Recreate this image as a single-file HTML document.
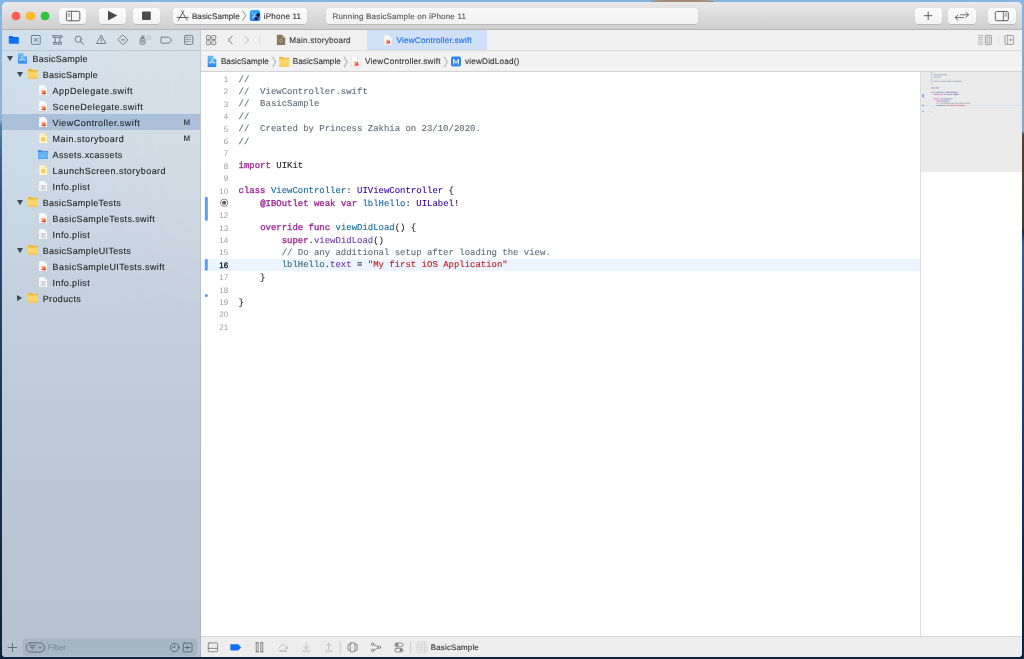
<!DOCTYPE html>
<html lang="en">
<head>
<meta charset="utf-8">
<title>BasicSample — ViewController.swift</title>
<style>
*{box-sizing:border-box;margin:0;padding:0}
html,body{width:1024px;height:659px;overflow:hidden}
body{font-family:"Liberation Sans",sans-serif;position:relative;text-rendering:geometricPrecision;
 background:linear-gradient(180deg,#86b5e3 0px,#8ab3dd 120px,#4d87ab 125px,#3b618d 160px,#30507e 200px,#2a4775 260px,#1b3458 400px,#12294a 550px,#0d2140 659px);}
.abs{position:absolute}
#rstrip{position:absolute;right:0;top:0;width:6px;height:659px;background:linear-gradient(180deg,#86b5e3 0px,#86a9c8 60px,#8aa8c2 131px,#4d4538 135px,#3e3a33 228px,#152a48 232px,#3a5f8d 243px,#2d4d7a 330px,#16305a 500px,#0d2140 659px)}
#island{position:absolute;left:651px;top:0;width:63px;height:2.600px;background:#a78a72;border-radius:45% 45% 0 0}
#win{filter:blur(.3px);will-change:transform;position:absolute;left:2px;top:2px;width:1020px;height:655px;border-radius:5px 5px 4px 4px;overflow:hidden;background:#fff}
/* ---------- toolbar ---------- */
#tb{position:absolute;left:0;top:0;width:1020px;height:28px;background:linear-gradient(180deg,#e9e9e9 0,#e4e4e4 20%,#d9d9d9 60%,#cfcfcf 100%);border-bottom:1px solid #b4b4b4}
.tl{position:absolute;top:9.7px;width:8.6px;height:8.6px;border-radius:50%}
.btn{position:absolute;top:6px;height:16px;border-radius:3.5px;background:linear-gradient(180deg,#fcfcfc,#f3f3f3);box-shadow:0 .4px .6px rgba(0,0,0,.22),0 0 0 .3px rgba(0,0,0,.06)}
.btn svg{position:absolute;left:0;top:0}
.tt{position:absolute;white-space:pre;line-height:1;-webkit-text-stroke:.12px}
/* ---------- sidebar ---------- */
#sb{position:absolute;left:0;top:28px;width:198px;height:627px;
 background:linear-gradient(180deg,#d6e2eb 0,#d3dee8 90px,#cad6e2 200px,#c0ccd9 330px,#bac6d3 480px,#b6c2cf 627px)}
#sbshade{position:absolute;left:0;top:0;width:100%;height:100%;background:linear-gradient(90deg,rgba(190,214,236,.2) 0,rgba(200,215,230,0) 50%,rgba(222,222,222,.22) 100%);-webkit-mask-image:linear-gradient(180deg,#000 0,#000 110px,transparent 290px);mask-image:linear-gradient(180deg,#000 0,#000 110px,transparent 290px)}
#navsep{position:absolute;left:0;top:20px;width:100%;height:1px;background:rgba(120,140,160,.28)}
.row{position:absolute;left:0;width:100%;height:16px}
.row .t{position:absolute;top:4.3px;font-size:9px;color:#20252a;white-space:pre;line-height:11px;-webkit-text-stroke:.12px #20252a}
.row svg{position:absolute}
.row .m{position:absolute;left:181.4px;top:4.2px;font-size:8px;font-weight:bold;color:#454b52;line-height:9px}
#sel{position:absolute;left:0;top:84px;width:100%;height:16px;background:#abc1d9}
/* ---------- editor ---------- */
#ed{position:absolute;left:198px;top:28px;width:822px;height:627px;background:#fff}
#eddiv{position:absolute;left:0;top:0;width:1px;height:627px;background:linear-gradient(180deg,#c6d0d9 0,#b4c0cd 300px,#a9b6c4 627px);z-index:5}
#tabs{position:absolute;left:0;top:0;width:100%;height:20.5px;background:#f0f0f0;border-bottom:1px solid #dadada}
#jump{position:absolute;left:0;top:20.5px;width:100%;height:21.5px;background:#f2f2f2;border-bottom:1px solid #d4d4d4}
#seltab{position:absolute;left:166.6px;top:0;width:120.3px;height:19.5px;background:#cfe0f8}
#code{position:absolute;left:0;top:42px;width:720px;height:564px;background:#fff}
#mini{position:absolute;left:720px;top:42px;width:102px;height:565px;background:#fff;border-left:1px solid #dcdcdc}
#minihl{position:absolute;left:0;top:0;width:100%;height:99.8px;background:#ebebeb}
#dbg{position:absolute;left:0;top:606px;width:100%;height:21px;background:#ededed;border-top:1px solid #d6d6d6}
.ln{position:absolute;left:0;width:28.2px;text-align:right;font-family:"Liberation Sans",sans-serif;font-size:8px;color:#9c9c9c;line-height:12.38px;height:12.38px;padding-top:.4px}
.cl{position:absolute;left:38.6px;font-family:"Liberation Mono",monospace;font-size:8.98px;line-height:12.38px;height:12.38px;white-space:pre;color:#262626;-webkit-text-stroke:.1px}
.c{color:#5d6c79}.k{color:#a02898;-webkit-text-stroke:.32px #a02898}.ty{color:#3900a0}.d{color:#0f68a0}.pr{color:#326d74}.f{color:#6c36a9}.s{color:#c41a16}.dv{color:#1c464a}
</style>
</head>
<body>
<div id="rstrip"></div>
<div id="island"></div>
<div id="win">
<div id="tb">
 <div class="tl" style="left:9.7px;background:#fd5f57;box-shadow:0 0 0 .3px #e2463e"></div>
 <div class="tl" style="left:24.4px;background:#febc2e;box-shadow:0 0 0 .3px #dfa023"></div>
 <div class="tl" style="left:38.8px;background:#28c840;box-shadow:0 0 0 .3px #1dad2b"></div>
 <div class="btn" style="left:57px;width:27.3px">
  <svg width="27.3" height="16" viewBox="0 0 27.3 16"><rect x="7.4" y="3.3" width="13.4" height="9.5" rx="1.3" fill="none" stroke="#4d4d4d" stroke-width=".9"/><path d="M12.5 3.3V12.8" stroke="#4d4d4d" stroke-width=".8"/><path d="M8.9 6h2.2M8.9 8h2.2" stroke="#4d4d4d" stroke-width=".8"/></svg>
 </div>
 <div class="btn" style="left:97px;width:27.3px">
  <svg width="27.3" height="16" viewBox="0 0 27.3 16"><path d="M9 2.7L18.4 7.6L9 12.5Z" fill="#4b4b4b"/></svg>
 </div>
 <div class="btn" style="left:131px;width:27px">
  <svg width="27" height="16" viewBox="0 0 27 16"><rect x="9" y="3.5" width="8.8" height="8.5" rx="1" fill="#4b4b4b"/></svg>
 </div>
 <div class="btn" style="left:171px;width:134.2px">
  <svg width="134.2" height="16" viewBox="0 0 134.2 16">
   <g stroke="#585858" stroke-width=".95" fill="none" stroke-linecap="round"><path d="M10.700 2.900L5.300 12.400M8.700 3.200L14.200 12.100M4.100 9.500H15.400"/></g>
   <path d="M69.500 2.700L72.900 7.600L69.500 12.600" stroke="#686868" stroke-width=".75" fill="none"/>
   <defs><linearGradient id="sim" x1="0" y1="0" x2="0" y2="1"><stop offset="0" stop-color="#3aaaf9"/><stop offset="1" stop-color="#1876f0"/></linearGradient></defs>
   <rect x="76.800" y="2.100" width="10.500" height="10.900" rx="2.300" fill="url(#sim)"/>
   <path d="M79 4.800L82.300 8.600M82.600 5.200L79.600 11.200M78.700 9.300L82.800 8.400" stroke="#a9dcff" stroke-width=".8" fill="none" stroke-linecap="round"/>
   <path d="M84.600 4.700L87.100 6.300L86 8.600L83.900 12.600L81.300 11L83.500 7.200Z" fill="#0b1220"/>
   <path d="M83.300 8.500L85.300 9.700" stroke="#dfe9f5" stroke-width=".7"/>
  </svg>
  <span class="tt" style="left:18.9px;top:4.64px;font-size:8.1px;letter-spacing:0.057px;color:#333">BasicSample</span>
  <span class="tt" style="left:90.8px;top:4.64px;font-size:8.1px;letter-spacing:0.180px;color:#333">iPhone 11</span>
 </div>
 <div class="btn" style="left:324px;width:372px;top:6.3px;height:15.6px;background:linear-gradient(180deg,#f9f9f9,#f1f1f1)">
  <span class="tt" style="left:6.5px;top:4.63px;font-size:8.0px;letter-spacing:0.191px;color:#555">Running BasicSample on iPhone 11</span>
 </div>
 <div class="btn" style="left:913px;width:27.2px">
  <svg width="27.2" height="16" viewBox="0 0 27.2 16"><path d="M13.2 3.5V12M9 7.7h8.4" stroke="#4d4d4d" stroke-width=".9" fill="none"/></svg>
 </div>
 <div class="btn" style="left:946.4px;width:27.6px">
  <svg width="27.6" height="16" viewBox="0 0 27.6 16"><g stroke="#4d4d4d" stroke-width=".85" fill="none" stroke-linecap="round" stroke-linejoin="round"><path d="M12.5 6.8h7.8M17.8 4.2L20.6 6.8L17.8 9.4"/><path d="M15.3 9.6H7.5M10 7L7.2 9.6L10 12.2"/></g></svg>
 </div>
 <div class="btn" style="left:986.3px;width:27.4px">
  <svg width="27.4" height="16" viewBox="0 0 27.4 16"><rect x="7.3" y="3.5" width="13" height="9.2" rx="1.3" fill="none" stroke="#4d4d4d" stroke-width=".9"/><path d="M15.4 3.5V12.7" stroke="#4d4d4d" stroke-width=".8"/><path d="M16.8 5.9h2.2M16.8 7.9h2.2" stroke="#4d4d4d" stroke-width=".8"/></svg>
 </div>
</div>

<!--SB0-->
<div id="sb">
 <div id="sbshade"></div>
 <svg class="abs" style="left:0;top:0" width="198.5" height="20" viewBox="0 0 198.5 20">
  <!-- project navigator (selected) -->
  <path d="M7.600 6H10.300L11.400 7H15.900a.9.900 0 0 1 .9.900V9H6.800V6.800A.8.800 0 0 1 7.600 6Z" fill="#0a66f2"/>
  <rect x="6.800" y="7.900" width="10" height="5.900" rx=".9" fill="#1271f8"/>
  <g fill="none" stroke="#5b6873" stroke-width=".8" stroke-linecap="round" stroke-linejoin="round">
   <!-- source control -->
   <rect x="29.400" y="5.500" width="8.800" height="8.800" rx=".8"/>
   <path d="M32.100 8.200L35.500 11.600M35.500 8.200L32.100 11.600" stroke-width=".9"/>
   <!-- symbol / hierarchy -->
   <rect x="50.800" y="5.700" width="9.500" height="1.600" rx=".3" stroke-linejoin="miter"/>
   <path d="M53.200 7.300V12.300M57.900 7.300V12.300" stroke-width=".8"/>
   <rect x="51.500" y="12.400" width="3.400" height="1.900" rx=".2" stroke-linejoin="miter"/>
   <rect x="56.200" y="12.400" width="3.400" height="1.900" rx=".2" stroke-linejoin="miter"/>
   <!-- search -->
   <circle cx="76.300" cy="9.200" r="3.100"/>
   <path d="M78.600 11.500L81.500 14.400" stroke-width="1"/>
   <!-- issue -->
   <path d="M99.300 5.400L103.800 13.500H94.900Z"/>
   <path d="M99.300 8.200V11M99.300 12.100V12.300" stroke-width=".8"/>
   <!-- test -->
   <path d="M121 5L125.900 9.900L121 14.800L116.100 9.900Z"/>
   <path d="M119.400 9.900H122.600" stroke-width=".9"/>
   <!-- debug / spray -->
   <rect x="138.200" y="8.600" width="4.800" height="5.700" rx="1"/>
   <path d="M139.400 8.600V7.100H141.800V8.600M140 7V6H142.300" stroke-width=".75"/>
   <rect x="139.700" y="10.300" width="1.900" height="2.300" rx=".4" stroke-width=".6"/>
   <path d="M144.800 6.300l.4-.3M145.700 7.900h.5M144.900 9.600l.4.300M146.600 5.600l.3-.4M147.600 7.300h.5M146.800 9.200l.4.300M148.300 6l.3-.2M148.400 8.700l.4.200" stroke="#8b98a3" stroke-width=".6"/>
   <!-- breakpoint -->
   <path d="M159.700 7.200H166.800L169.900 10.200L166.800 13.200H159.700a.7.700 0 0 1-.7-.7V7.900a.7.700 0 0 1 .7-.7Z"/>
   <!-- report -->
   <rect x="182.600" y="5.400" width="8.200" height="9" rx="1"/>
   <path d="M184.600 7.600H188.900M184.600 9.500H188.900M184.600 11.400H188.900" stroke-width=".7" stroke="#7b8893"/>
   <path d="M184.100 5.400V14.400" stroke-width=".5" stroke="#8894a0"/>
  </g>
 </svg>
 <div id="navsep"></div>
<!--ROWS0-->
<div id="sel"></div>
<div class="row" style="top:20px"><svg style="left:4.7px;top:5.800px" width="6" height="5.200" viewBox="0 0 6 5.200"><path d="M0 0H6L3 5.200Z" fill="#414a52"/></svg><svg style="left:16.2px;top:2.5px" width="9" height="11.4" viewBox="0 0 9 11.4"><defs><linearGradient id="pg" x1="0" y1="0" x2="0" y2="1"><stop offset="0" stop-color="#7cc5f8"/><stop offset="1" stop-color="#2b83ee"/></linearGradient></defs><path d="M.8 0H5.6L9 3.2V10.6a.8.8 0 0 1-.8.8H.8A.8.8 0 0 1 0 10.600V.8A.8.8 0 0 1 .8 0Z" fill="url(#pg)"/><path d="M5.600 0L9 3.200H6.300a.7.7 0 0 1-.7-.7Z" fill="#d7ecfd"/><path d="M4.300 3.600L2.300 8M4.300 3.600L6.600 8M1.500 6.700H7.400" stroke="#d4ebfd" stroke-width=".65" fill="none" stroke-linecap="round"/><rect x="0" y="10.300" width="9" height=".6" fill="#9ccdfb" opacity=".8"/></svg><span class="t" style="left:30.6px;letter-spacing:0.243px">BasicSample</span></div>
<div class="row" style="top:36px"><svg style="left:14.8px;top:5.800px" width="6" height="5.200" viewBox="0 0 6 5.200"><path d="M0 0H6L3 5.200Z" fill="#414a52"/></svg><svg style="left:25.600px;top:3.400px" width="10.600" height="9.600" viewBox="0 0 10.600 9.600"><path d="M.7 0H3.700L4.700 1H9.900a.7.7 0 0 1 .7.700V3H0V.7A.7.7 0 0 1 .7 0Z" fill="#efb52c"/><rect x="0" y="1.900" width="10.600" height="7.700" rx=".8" fill="#fdd667"/><rect x="0" y="8.800" width="10.600" height=".8" rx=".4" fill="#f0b62e"/><path d="M.3 2.400H10.300" stroke="#f3c13f" stroke-width=".6"/></svg><span class="t" style="left:40.7px;letter-spacing:0.243px">BasicSample</span></div>
<div class="row" style="top:52px"><svg style="left:36.900px;top:2.700px" width="8.600" height="10.800" viewBox="0 0 8.600 10.800"><defs><linearGradient id="sw" x1="0" y1="0" x2="0" y2="1"><stop offset="0" stop-color="#f98a3c"/><stop offset="1" stop-color="#ef3b2d"/></linearGradient></defs><path d="M.6 0H5.500L8.600 3.100V10.200a.6.600 0 0 1-.6.600H.6A.6.600 0 0 1 0 10.200V.6A.6.600 0 0 1 .6 0Z" fill="#fdfdfd" stroke="#d9dde1" stroke-width=".35"/><path d="M5.500 0L8.600 3.100H6.100a.6.600 0 0 1-.6-.6Z" fill="#e6e9ec"/><path d="M1.200 8.100C2.500 9.600 4.900 9.800 6.100 8.900C6.500 9.100 6.800 9.400 7 9.700C7.200 8.700 7 8 6.600 7.500C7 6.200 6.300 4.900 5 4.300C5.500 5.100 5.600 5.900 5.300 6.600L2.300 4.400C2.600 5.100 3.300 6 3.900 6.500L1.700 5.100C2.300 6.200 3.200 7.200 4.100 7.900C3.300 8.300 2.200 8.400 1.200 8.100Z" fill="url(#sw)"/></svg><span class="t" style="left:50.6px;letter-spacing:0.456px">AppDelegate.swift</span></div>
<div class="row" style="top:68px"><svg style="left:36.900px;top:2.700px" width="8.600" height="10.800" viewBox="0 0 8.600 10.800"><defs><linearGradient id="sw" x1="0" y1="0" x2="0" y2="1"><stop offset="0" stop-color="#f98a3c"/><stop offset="1" stop-color="#ef3b2d"/></linearGradient></defs><path d="M.6 0H5.500L8.600 3.100V10.200a.6.600 0 0 1-.6.600H.6A.6.600 0 0 1 0 10.200V.6A.6.600 0 0 1 .6 0Z" fill="#fdfdfd" stroke="#d9dde1" stroke-width=".35"/><path d="M5.500 0L8.600 3.100H6.100a.6.600 0 0 1-.6-.6Z" fill="#e6e9ec"/><path d="M1.200 8.100C2.500 9.600 4.900 9.800 6.100 8.900C6.500 9.100 6.800 9.400 7 9.700C7.200 8.700 7 8 6.600 7.500C7 6.200 6.300 4.900 5 4.300C5.500 5.100 5.600 5.900 5.300 6.600L2.300 4.400C2.600 5.100 3.300 6 3.900 6.500L1.700 5.100C2.300 6.200 3.200 7.200 4.100 7.900C3.300 8.300 2.200 8.400 1.200 8.100Z" fill="url(#sw)"/></svg><span class="t" style="left:50.6px;letter-spacing:0.445px">SceneDelegate.swift</span></div>
<div class="row" style="top:84px"><svg style="left:36.900px;top:2.700px" width="8.600" height="10.800" viewBox="0 0 8.600 10.800"><defs><linearGradient id="sw" x1="0" y1="0" x2="0" y2="1"><stop offset="0" stop-color="#f98a3c"/><stop offset="1" stop-color="#ef3b2d"/></linearGradient></defs><path d="M.6 0H5.500L8.600 3.100V10.200a.6.600 0 0 1-.6.600H.6A.6.600 0 0 1 0 10.200V.6A.6.600 0 0 1 .6 0Z" fill="#fdfdfd" stroke="#d9dde1" stroke-width=".35"/><path d="M5.500 0L8.600 3.100H6.100a.6.600 0 0 1-.6-.6Z" fill="#e6e9ec"/><path d="M1.200 8.100C2.500 9.600 4.900 9.800 6.100 8.900C6.500 9.100 6.800 9.400 7 9.700C7.200 8.700 7 8 6.600 7.500C7 6.200 6.300 4.900 5 4.300C5.500 5.100 5.600 5.900 5.300 6.600L2.300 4.400C2.600 5.100 3.300 6 3.900 6.500L1.700 5.100C2.300 6.200 3.200 7.200 4.100 7.900C3.300 8.300 2.200 8.400 1.200 8.100Z" fill="url(#sw)"/></svg><span class="t" style="left:50.6px;letter-spacing:0.457px">ViewController.swift</span><span class="m">M</span></div>
<div class="row" style="top:100px"><svg style="left:36.900px;top:2.600px" width="8.600" height="10.800" viewBox="0 0 8.600 10.800"><path d="M.6 0H5.500L8.600 3.100V10.200a.6.600 0 0 1-.6.600H.6A.6.600 0 0 1 0 10.200V.6A.6.600 0 0 1 .6 0Z" fill="#fdf3cf" stroke="#f3d27a" stroke-width=".5"/><path d="M5.500 0L8.600 3.100H6.100a.6.600 0 0 1-.6-.6Z" fill="#f7dc8f"/><circle cx="4.300" cy="6.200" r="2.100" fill="#f6bd2a"/><path d="M3.100 6.200h2.100M4.400 5.300l.9.900-.9.900" stroke="#fff8e0" stroke-width=".55" fill="none"/></svg><span class="t" style="left:50.6px;letter-spacing:0.478px">Main.storyboard</span><span class="m">M</span></div>
<div class="row" style="top:116px"><svg style="left:35.900px;top:3.600px" width="10.400" height="9.200" viewBox="0 0 10.400 9.200"><path d="M.7 0H3.600L4.600 1H9.700a.7.7 0 0 1 .7.700V3H0V.7A.7.7 0 0 1 .7 0Z" fill="#3b8ee8"/><rect x="0" y="1.800" width="10.400" height="7.400" rx=".8" fill="#62b1f6"/><path d="M3 4.200l2 1.300-2 1.300M5.500 7h2" stroke="#a9d6fb" stroke-width=".6" fill="none"/><rect x="0" y="8.500" width="10.400" height=".7" rx=".35" fill="#3d93ea"/></svg><span class="t" style="left:50.6px;letter-spacing:0.369px">Assets.xcassets</span></div>
<div class="row" style="top:132px"><svg style="left:36.900px;top:2.600px" width="8.600" height="10.800" viewBox="0 0 8.600 10.800"><path d="M.6 0H5.500L8.600 3.100V10.200a.6.600 0 0 1-.6.600H.6A.6.600 0 0 1 0 10.200V.6A.6.600 0 0 1 .6 0Z" fill="#fdf3cf" stroke="#f3d27a" stroke-width=".5"/><path d="M5.500 0L8.600 3.100H6.100a.6.600 0 0 1-.6-.6Z" fill="#f7dc8f"/><circle cx="4.300" cy="6.200" r="2.100" fill="#f6bd2a"/><path d="M3.100 6.200h2.100M4.400 5.300l.9.900-.9.900" stroke="#fff8e0" stroke-width=".55" fill="none"/></svg><span class="t" style="left:50.6px;letter-spacing:0.449px">LaunchScreen.storyboard</span></div>
<div class="row" style="top:148px"><svg style="left:36.900px;top:2.600px" width="8.600" height="10.800" viewBox="0 0 8.600 10.800"><path d="M.6 0H5.500L8.600 3.100V10.200a.6.600 0 0 1-.6.600H.6A.6.600 0 0 1 0 10.200V.6A.6.600 0 0 1 .6 0Z" fill="#fbfbfb" stroke="#d4d8dc" stroke-width=".35"/><path d="M5.500 0L8.600 3.100H6.100a.6.600 0 0 1-.6-.6Z" fill="#e3e6e9"/><path d="M1.600 4.500H7M1.600 6H7M1.600 7.500H7M1.600 9H7M3.400 4.500V9M5.200 4.500V9" stroke="#b4b9be" stroke-width=".55" fill="none"/></svg><span class="t" style="left:50.6px;letter-spacing:0.398px">Info.plist</span></div>
<div class="row" style="top:164px"><svg style="left:14.8px;top:5.800px" width="6" height="5.200" viewBox="0 0 6 5.200"><path d="M0 0H6L3 5.200Z" fill="#414a52"/></svg><svg style="left:25.600px;top:3.400px" width="10.600" height="9.600" viewBox="0 0 10.600 9.600"><path d="M.7 0H3.700L4.700 1H9.900a.7.7 0 0 1 .7.700V3H0V.7A.7.7 0 0 1 .7 0Z" fill="#efb52c"/><rect x="0" y="1.900" width="10.600" height="7.700" rx=".8" fill="#fdd667"/><rect x="0" y="8.800" width="10.600" height=".8" rx=".4" fill="#f0b62e"/><path d="M.3 2.400H10.300" stroke="#f3c13f" stroke-width=".6"/></svg><span class="t" style="left:40.7px;letter-spacing:0.298px">BasicSampleTests</span></div>
<div class="row" style="top:180px"><svg style="left:36.900px;top:2.700px" width="8.600" height="10.800" viewBox="0 0 8.600 10.800"><defs><linearGradient id="sw" x1="0" y1="0" x2="0" y2="1"><stop offset="0" stop-color="#f98a3c"/><stop offset="1" stop-color="#ef3b2d"/></linearGradient></defs><path d="M.6 0H5.500L8.600 3.100V10.200a.6.600 0 0 1-.6.600H.6A.6.600 0 0 1 0 10.200V.6A.6.600 0 0 1 .6 0Z" fill="#fdfdfd" stroke="#d9dde1" stroke-width=".35"/><path d="M5.500 0L8.600 3.100H6.100a.6.600 0 0 1-.6-.6Z" fill="#e6e9ec"/><path d="M1.200 8.100C2.500 9.600 4.900 9.800 6.100 8.900C6.500 9.100 6.800 9.400 7 9.700C7.200 8.700 7 8 6.600 7.500C7 6.200 6.300 4.900 5 4.300C5.500 5.100 5.600 5.900 5.300 6.600L2.300 4.400C2.600 5.100 3.300 6 3.900 6.500L1.700 5.100C2.300 6.200 3.200 7.200 4.100 7.900C3.300 8.300 2.200 8.400 1.200 8.100Z" fill="url(#sw)"/></svg><span class="t" style="left:50.6px;letter-spacing:0.385px">BasicSampleTests.swift</span></div>
<div class="row" style="top:196px"><svg style="left:36.900px;top:2.600px" width="8.600" height="10.800" viewBox="0 0 8.600 10.800"><path d="M.6 0H5.500L8.600 3.100V10.200a.6.600 0 0 1-.6.600H.6A.6.600 0 0 1 0 10.200V.6A.6.600 0 0 1 .6 0Z" fill="#fbfbfb" stroke="#d4d8dc" stroke-width=".35"/><path d="M5.500 0L8.600 3.100H6.100a.6.600 0 0 1-.6-.6Z" fill="#e3e6e9"/><path d="M1.600 4.500H7M1.600 6H7M1.600 7.500H7M1.600 9H7M3.400 4.500V9M5.200 4.500V9" stroke="#b4b9be" stroke-width=".55" fill="none"/></svg><span class="t" style="left:50.6px;letter-spacing:0.398px">Info.plist</span></div>
<div class="row" style="top:212px"><svg style="left:14.8px;top:5.800px" width="6" height="5.200" viewBox="0 0 6 5.200"><path d="M0 0H6L3 5.200Z" fill="#414a52"/></svg><svg style="left:25.600px;top:3.400px" width="10.600" height="9.600" viewBox="0 0 10.600 9.600"><path d="M.7 0H3.700L4.700 1H9.900a.7.7 0 0 1 .7.700V3H0V.7A.7.7 0 0 1 .7 0Z" fill="#efb52c"/><rect x="0" y="1.900" width="10.600" height="7.700" rx=".8" fill="#fdd667"/><rect x="0" y="8.800" width="10.600" height=".8" rx=".4" fill="#f0b62e"/><path d="M.3 2.400H10.300" stroke="#f3c13f" stroke-width=".6"/></svg><span class="t" style="left:40.7px;letter-spacing:0.326px">BasicSampleUITests</span></div>
<div class="row" style="top:228px"><svg style="left:36.900px;top:2.700px" width="8.600" height="10.800" viewBox="0 0 8.600 10.800"><defs><linearGradient id="sw" x1="0" y1="0" x2="0" y2="1"><stop offset="0" stop-color="#f98a3c"/><stop offset="1" stop-color="#ef3b2d"/></linearGradient></defs><path d="M.6 0H5.500L8.600 3.100V10.200a.6.600 0 0 1-.6.600H.6A.6.600 0 0 1 0 10.200V.6A.6.600 0 0 1 .6 0Z" fill="#fdfdfd" stroke="#d9dde1" stroke-width=".35"/><path d="M5.500 0L8.600 3.100H6.100a.6.600 0 0 1-.6-.6Z" fill="#e6e9ec"/><path d="M1.200 8.100C2.500 9.600 4.900 9.800 6.100 8.900C6.500 9.100 6.800 9.400 7 9.700C7.200 8.700 7 8 6.600 7.500C7 6.200 6.300 4.900 5 4.300C5.500 5.100 5.600 5.900 5.300 6.600L2.300 4.400C2.600 5.100 3.300 6 3.900 6.500L1.700 5.100C2.300 6.200 3.200 7.200 4.100 7.900C3.300 8.300 2.200 8.400 1.200 8.100Z" fill="url(#sw)"/></svg><span class="t" style="left:50.6px;letter-spacing:0.390px">BasicSampleUITests.swift</span></div>
<div class="row" style="top:244px"><svg style="left:36.900px;top:2.600px" width="8.600" height="10.800" viewBox="0 0 8.600 10.800"><path d="M.6 0H5.500L8.600 3.100V10.200a.6.600 0 0 1-.6.600H.6A.6.600 0 0 1 0 10.200V.6A.6.600 0 0 1 .6 0Z" fill="#fbfbfb" stroke="#d4d8dc" stroke-width=".35"/><path d="M5.500 0L8.600 3.100H6.100a.6.600 0 0 1-.6-.6Z" fill="#e3e6e9"/><path d="M1.600 4.500H7M1.600 6H7M1.600 7.500H7M1.600 9H7M3.400 4.500V9M5.200 4.500V9" stroke="#b4b9be" stroke-width=".55" fill="none"/></svg><span class="t" style="left:50.6px;letter-spacing:0.398px">Info.plist</span></div>
<div class="row" style="top:260px"><svg style="left:15.4px;top:5.100px" width="5.200" height="6" viewBox="0 0 5.200 6"><path d="M0 0V6L5.200 3Z" fill="#414a52"/></svg><svg style="left:25.600px;top:3.400px" width="10.600" height="9.600" viewBox="0 0 10.600 9.600"><path d="M.7 0H3.700L4.700 1H9.900a.7.7 0 0 1 .7.700V3H0V.7A.7.7 0 0 1 .7 0Z" fill="#efb52c"/><rect x="0" y="1.900" width="10.600" height="7.700" rx=".8" fill="#fdd667"/><rect x="0" y="8.800" width="10.600" height=".8" rx=".4" fill="#f0b62e"/><path d="M.3 2.400H10.300" stroke="#f3c13f" stroke-width=".6"/></svg><span class="t" style="left:40.7px;letter-spacing:0.373px">Products</span></div>
<!--ROWS1-->
 <div class="abs" style="left:20.600px;top:609.200px;width:174px;height:16px;border-radius:3px;background:rgba(120,135,155,.22);box-shadow:0 0 0 .4px rgba(90,105,125,.18)"></div>
 <svg class="abs" style="left:0;top:606px" width="198.5" height="21" viewBox="0 0 198.5 21">
  <g fill="none" stroke="#4f5a64" stroke-width=".8" stroke-linecap="round" stroke-linejoin="round">
   <path d="M10.500 7.200V15.800M6.200 11.500H14.800" stroke-width=".8"/>
   <rect x="24.100" y="6.900" width="18.600" height="9.200" rx="4.600"/>
   <path d="M27.700 9.600H33.300M28.700 11.400H32.300M29.700 13.200H31.300" stroke-width=".8"/>
   <path d="M36.300 10.600L38 12.400L39.700 10.600" stroke-width=".9"/>
   <circle cx="172.700" cy="11.400" r="4.200"/>
   <path d="M172.700 8.800V11.500H170.500" stroke-width=".7"/>
   <rect x="181.200" y="7.100" width="8.800" height="8.800" rx="1"/>
   <path d="M183 11.500H188.200M185.300 9.900V13.100" stroke-width=".8"/>
  </g>
 </svg>
 <span class="tt" style="left:45.6px;top:614.03px;font-size:8.0px;letter-spacing:0.104px;color:#808b98">Filter</span>
</div>
<!--SB1-->
<!--ED0-->
<div id="ed"><div id="eddiv"></div>
 <div id="tabs">
  <div id="seltab"></div>
  <svg class="abs" style="left:0;top:0" width="822" height="20" viewBox="0 0 822 20">
   <g fill="none" stroke="#6b6b6b" stroke-width=".75" stroke-linejoin="round">
    <rect x="6.500" y="5.500" width="4" height="4" rx=".5"/><rect x="11.800" y="5.500" width="4" height="4" rx=".5"/>
    <rect x="6.500" y="10.700" width="4" height="4" rx=".5"/><rect x="11.800" y="10.700" width="4" height="4" rx=".5"/>
    <path d="M8 7.500h1M13.300 7.500h1.200M8 12.700h1M13.300 12.700h1.200" stroke-width=".6"/>
   </g>
   <path d="M32.200 6.100L28.300 10L32.200 13.900" fill="none" stroke="#5c5c5c" stroke-width=".85" stroke-linecap="round" stroke-linejoin="round"/>
   <path d="M44.800 6.100L48.700 10L44.800 13.900" fill="none" stroke="#a9a9a9" stroke-width=".85" stroke-linecap="round" stroke-linejoin="round"/>
   <path d="M59.500 6V14" stroke="#d6d6d6" stroke-width=".7"/>
   <!-- storyboard tab icon (dimmed) -->
   <path d="M77.500 4.700H82.200L85.200 7.700V14.400a.6.600 0 0 1-.6.600H77.500a.6.600 0 0 1-.6-.6V5.300a.6.600 0 0 1 .6-.6Z" fill="#8c765c"/>
   <path d="M82.200 4.700L85.200 7.700H82.800a.6.600 0 0 1-.6-.6Z" fill="#b7a58f"/>
   <circle cx="81" cy="10.800" r="2" fill="#a99a87"/>
   <path d="M79.900 10.800h2M81.200 10l.8.800-.8.800" stroke="#6f5c45" stroke-width=".5" fill="none"/>
   <!-- swift tab icon -->
   <defs><linearGradient id="sw2" x1="0" y1="0" x2="0" y2="1"><stop offset="0" stop-color="#f98a3c"/><stop offset="1" stop-color="#ef3b2d"/></linearGradient></defs><g transform="translate(184.2,5) scale(.872,.917)"><path d="M.6 0H5.500L8.600 3.100V10.200a.6.600 0 0 1-.6.600H.6A.6.600 0 0 1 0 10.200V.6A.6.600 0 0 1 .6 0Z" fill="#fdfdfd" stroke="#d5dbe3" stroke-width=".35"/><path d="M5.500 0L8.600 3.100H6.100a.6.600 0 0 1-.6-.6Z" fill="#e1e6ec"/><path d="M1.200 8.100C2.500 9.600 4.900 9.800 6.100 8.900C6.500 9.100 6.800 9.400 7 9.700C7.200 8.700 7 8 6.600 7.500C7 6.200 6.300 4.900 5 4.300C5.500 5.100 5.600 5.900 5.300 6.600L2.300 4.400C2.600 5.100 3.300 6 3.900 6.500L1.700 5.100C2.300 6.200 3.200 7.200 4.100 7.900C3.300 8.300 2.200 8.400 1.200 8.100Z" fill="url(#sw2)"/></g>
   <!-- right side icons -->
   <g fill="none" stroke="#7a7a7a" stroke-width=".7">
    <path d="M778 5.400h5.200M778 7.600h5.200M778 9.800h5.200M778 12h5.200M778 14.200h5.200" stroke="#8a8a8a" stroke-width=".6"/>
    <rect x="785.400" y="5.300" width="6" height="9.300" rx=".8"/>
    <rect x="787.200" y="7" width="2.400" height="6" rx=".3" stroke-width=".6"/>
    <path d="M798.400 6V14" stroke="#d9d9d9" stroke-width=".6"/>
    <rect x="805" y="5.400" width="8.600" height="9" rx="1.200"/>
    <path d="M807.600 5.400V14.400" stroke-width=".6"/>
    <path d="M809.300 9.900h3M810.800 8.400v3" stroke-width=".7"/>
   </g>
  </svg>
  <span class="tt" style="left:89.3px;top:6.56px;font-size:8.2px;letter-spacing:0.187px;color:#3a3a3a">Main.storyboard</span>
  <span class="tt" style="left:196.4px;top:6.56px;font-size:8.2px;letter-spacing:0.215px;color:#1a6ff0">ViewController.swift</span>
 </div>
 <div id="jump">
  <svg class="abs" style="left:0;top:0" width="400" height="21" viewBox="0 0 400 21">
   <defs><linearGradient id="pg2" x1="0" y1="0" x2="0" y2="1"><stop offset="0" stop-color="#6cbcf7"/><stop offset="1" stop-color="#2d84ea"/></linearGradient></defs>
   <!-- project icon -->
   <path d="M8.400 4.800H13.100L16.300 7.900V15.200a.7.700 0 0 1-.7.700H8.400a.7.700 0 0 1-.7-.7V5.500a.7.700 0 0 1 .7-.7Z" fill="url(#pg2)"/>
   <path d="M13.100 4.800L16.300 7.900H13.700a.6.600 0 0 1-.6-.6Z" fill="#d7ecfd"/>
   <path d="M12 8.400L10 12.600M12 8.400L14.200 12.600M9.200 11.400H15" stroke="#eef7ff" stroke-width=".7" fill="none" stroke-linecap="round"/>
   <!-- chevrons -->
   <g fill="none" stroke="#6e6e6e" stroke-width=".6"><path d="M72.600 5.800L75.600 10.900L72.600 16"/><path d="M144.100 5.800L147.100 10.900L144.100 16"/><path d="M244.300 5.800L247.300 10.900L244.300 16"/></g>
   <!-- folder -->
   <path d="M79.900 6.100H82.800L83.800 7.100H88.600a.7.700 0 0 1 .7.700V9H79.200V6.800a.7.700 0 0 1 .7-.7Z" fill="#efb52c"/>
   <rect x="79.200" y="8" width="10.100" height="7.500" rx=".8" fill="#fdd667"/>
   <rect x="79.200" y="14.700" width="10.100" height=".8" rx=".4" fill="#f2bb3a"/>
   <!-- swift file -->
   <defs><linearGradient id="sw3" x1="0" y1="0" x2="0" y2="1"><stop offset="0" stop-color="#f98a3c"/><stop offset="1" stop-color="#ef3b2d"/></linearGradient></defs><g transform="translate(151.9,5.2) scale(.977,1.02)"><path d="M.6 0H5.500L8.600 3.100V10.200a.6.600 0 0 1-.6.600H.6A.6.600 0 0 1 0 10.200V.6A.6.600 0 0 1 .6 0Z" fill="#fdfdfd" stroke="#d2d2d2" stroke-width=".35"/><path d="M5.500 0L8.600 3.100H6.100a.6.600 0 0 1-.6-.6Z" fill="#e4e4e4"/><path d="M1.200 8.100C2.500 9.600 4.900 9.800 6.100 8.900C6.500 9.100 6.800 9.400 7 9.700C7.200 8.700 7 8 6.600 7.500C7 6.200 6.300 4.900 5 4.300C5.500 5.100 5.600 5.900 5.300 6.600L2.300 4.400C2.600 5.100 3.300 6 3.900 6.500L1.700 5.100C2.300 6.200 3.200 7.200 4.100 7.900C3.300 8.300 2.200 8.400 1.200 8.100Z" fill="url(#sw3)"/></g>
   <!-- method icon -->
   <rect x="251" y="5.600" width="10" height="10" rx="1.800" fill="#2f83f3"/>
   <path d="M253.600 13.200V8.100L256 12.300L258.400 8.100V13.200" stroke="#fff" stroke-width=".95" fill="none" stroke-linejoin="round" stroke-linecap="round"/>
  </svg>
  <span class="tt" style="left:20.9px;top:7.66px;font-size:8.2px;letter-spacing:0.022px;color:#333">BasicSample</span>
  <span class="tt" style="left:92.8px;top:7.66px;font-size:8.2px;letter-spacing:0.022px;color:#333">BasicSample</span>
  <span class="tt" style="left:165px;top:7.66px;font-size:8.2px;letter-spacing:0.225px;color:#333">ViewController.swift</span>
  <span class="tt" style="left:265.1px;top:7.66px;font-size:8.2px;letter-spacing:0.153px;color:#333">viewDidLoad()</span>
 </div>
 <div id="code">
<!--CODE0-->
<div class="abs" style="left:0;top:187.10px;width:720px;height:12.38px;background:#ebf4ff"></div>
<div class="ln" style="top:1.70px">1</div>
<div class="cl" style="top:1.70px"><span class="c">//</span></div>
<div class="ln" style="top:14.08px">2</div>
<div class="cl" style="top:14.08px"><span class="c">//  ViewController.swift</span></div>
<div class="ln" style="top:26.46px">3</div>
<div class="cl" style="top:26.46px"><span class="c">//  BasicSample</span></div>
<div class="ln" style="top:38.84px">4</div>
<div class="cl" style="top:38.84px"><span class="c">//</span></div>
<div class="ln" style="top:51.22px">5</div>
<div class="cl" style="top:51.22px"><span class="c">//  Created by Princess Zakhia on 23/10/2020.</span></div>
<div class="ln" style="top:63.60px">6</div>
<div class="cl" style="top:63.60px"><span class="c">//</span></div>
<div class="ln" style="top:75.98px">7</div>
<div class="ln" style="top:88.36px">8</div>
<div class="cl" style="top:88.36px"><span class="k">import</span> UIKit</div>
<div class="ln" style="top:100.74px">9</div>
<div class="ln" style="top:113.12px">10</div>
<div class="cl" style="top:113.12px"><span class="k">class</span> <span class="d">ViewController</span>: <span class="ty">UIViewController</span> {</div>
<div class="cl" style="top:125.50px">    <span class="k">@IBOutlet</span> <span class="k">weak</span> <span class="k">var</span> <span class="d">lblHello</span>: <span class="ty">UILabel</span>!</div>
<div class="ln" style="top:137.88px">12</div>
<div class="ln" style="top:150.26px">13</div>
<div class="cl" style="top:150.26px">    <span class="k">override</span> <span class="k">func</span> <span class="d">viewDidLoad</span>() {</div>
<div class="ln" style="top:162.64px">14</div>
<div class="cl" style="top:162.64px">        <span class="k">super</span>.<span class="f">viewDidLoad</span>()</div>
<div class="ln" style="top:175.02px">15</div>
<div class="cl" style="top:175.02px">        <span class="c">// Do any additional setup after loading the view.</span></div>
<div class="ln" style="top:187.40px;color:#151515;-webkit-text-stroke:.3px #151515">16</div>
<div class="cl" style="top:187.40px">        <span class="pr">lblHello</span>.<span class="f">text</span> = <span class="s">"My first iOS Application"</span></div>
<div class="ln" style="top:199.78px">17</div>
<div class="cl" style="top:199.78px">    }</div>
<div class="ln" style="top:212.16px">18</div>
<div class="ln" style="top:224.54px">19</div>
<div class="cl" style="top:224.54px">}</div>
<div class="ln" style="top:236.92px">20</div>
<div class="ln" style="top:249.30px">21</div>
<!--CODE1-->
  <svg class="abs" style="left:0;top:0" width="40" height="566" viewBox="0 0 40 566">
   <rect x="4.900" y="124.700" width="2.900" height="24.300" rx="1.400" fill="#5b9bf8"/>
   <rect x="4.900" y="186.900" width="2.900" height="11.900" rx="1.400" fill="#5b9bf8"/>
   <circle cx="6.400" cy="223.600" r="1.500" fill="#5b9bf8"/>
   <circle cx="24.200" cy="130.750" r="3.700" fill="none" stroke="#6a6a6a" stroke-width=".8"/>
   <circle cx="24.200" cy="130.750" r="2.100" fill="#5a5a5a"/>
  </svg>
 </div>
 <div id="mini">
  <div id="minihl"></div>
  <svg class="abs" style="left:0;top:0" width="102" height="110" viewBox="0 0 102 110">
   <rect x="0" y="33" width="102" height="1" fill="#d6e6f7"/>
   <rect x="1.300" y="22" width="1.500" height="3.600" rx=".6" fill="#5b9bf8"/>
   <rect x="1.300" y="32.700" width="1.700" height="1.500" rx=".5" fill="#5b9bf8"/>
   <circle cx="2" cy="39.300" r=".7" fill="#5b9bf8"/>
   <g opacity=".62">
<!--MINI0-->
<rect x="9.90" y="0.05" width="1.36" height="1.1" fill="#8d99a4"/>
<rect x="9.90" y="2.24" width="1.36" height="1.1" fill="#8d99a4"/>
<rect x="12.62" y="2.24" width="13.60" height="1.1" fill="#8d99a4"/>
<rect x="9.90" y="4.43" width="1.36" height="1.1" fill="#8d99a4"/>
<rect x="12.62" y="4.43" width="7.48" height="1.1" fill="#8d99a4"/>
<rect x="9.90" y="6.62" width="1.36" height="1.1" fill="#8d99a4"/>
<rect x="9.90" y="8.81" width="1.36" height="1.1" fill="#8d99a4"/>
<rect x="12.62" y="8.81" width="4.76" height="1.1" fill="#8d99a4"/>
<rect x="18.06" y="8.81" width="1.36" height="1.1" fill="#8d99a4"/>
<rect x="20.10" y="8.81" width="5.44" height="1.1" fill="#8d99a4"/>
<rect x="26.22" y="8.81" width="4.08" height="1.1" fill="#8d99a4"/>
<rect x="30.98" y="8.81" width="1.36" height="1.1" fill="#8d99a4"/>
<rect x="33.02" y="8.81" width="7.48" height="1.1" fill="#8d99a4"/>
<rect x="9.90" y="11.00" width="1.36" height="1.1" fill="#8d99a4"/>
<rect x="9.90" y="15.38" width="4.08" height="1.1" fill="#c45fbc"/>
<rect x="14.66" y="15.38" width="3.40" height="1.1" fill="#7a7a7a"/>
<rect x="9.90" y="19.76" width="3.40" height="1.1" fill="#c45fbc"/>
<rect x="13.98" y="19.76" width="9.52" height="1.1" fill="#4a93bf"/>
<rect x="23.50" y="19.76" width="0.68" height="1.1" fill="#7a7a7a"/>
<rect x="24.86" y="19.76" width="10.88" height="1.1" fill="#7a55c8"/>
<rect x="36.42" y="19.76" width="0.68" height="1.1" fill="#7a7a7a"/>
<rect x="12.62" y="21.95" width="6.12" height="1.1" fill="#c45fbc"/>
<rect x="19.42" y="21.95" width="2.72" height="1.1" fill="#c45fbc"/>
<rect x="22.82" y="21.95" width="2.04" height="1.1" fill="#c45fbc"/>
<rect x="25.54" y="21.95" width="5.44" height="1.1" fill="#4a93bf"/>
<rect x="30.98" y="21.95" width="0.68" height="1.1" fill="#7a7a7a"/>
<rect x="32.34" y="21.95" width="4.76" height="1.1" fill="#7a55c8"/>
<rect x="37.10" y="21.95" width="0.68" height="1.1" fill="#7a7a7a"/>
<rect x="12.62" y="26.33" width="5.44" height="1.1" fill="#c45fbc"/>
<rect x="18.74" y="26.33" width="2.72" height="1.1" fill="#c45fbc"/>
<rect x="22.14" y="26.33" width="7.48" height="1.1" fill="#4a93bf"/>
<rect x="29.62" y="26.33" width="1.36" height="1.1" fill="#7a7a7a"/>
<rect x="31.66" y="26.33" width="0.68" height="1.1" fill="#7a7a7a"/>
<rect x="15.34" y="28.52" width="3.40" height="1.1" fill="#c45fbc"/>
<rect x="18.74" y="28.52" width="0.68" height="1.1" fill="#7a7a7a"/>
<rect x="19.42" y="28.52" width="7.48" height="1.1" fill="#9670c8"/>
<rect x="26.90" y="28.52" width="1.36" height="1.1" fill="#7a7a7a"/>
<rect x="15.34" y="30.71" width="1.36" height="1.1" fill="#8d99a4"/>
<rect x="17.38" y="30.71" width="1.36" height="1.1" fill="#8d99a4"/>
<rect x="19.42" y="30.71" width="2.04" height="1.1" fill="#8d99a4"/>
<rect x="22.14" y="30.71" width="6.80" height="1.1" fill="#8d99a4"/>
<rect x="29.62" y="30.71" width="3.40" height="1.1" fill="#8d99a4"/>
<rect x="33.70" y="30.71" width="3.40" height="1.1" fill="#8d99a4"/>
<rect x="37.78" y="30.71" width="4.76" height="1.1" fill="#8d99a4"/>
<rect x="43.22" y="30.71" width="2.04" height="1.1" fill="#8d99a4"/>
<rect x="45.94" y="30.71" width="3.40" height="1.1" fill="#8d99a4"/>
<rect x="15.34" y="32.90" width="5.44" height="1.1" fill="#6b9aa0"/>
<rect x="20.78" y="32.90" width="0.68" height="1.1" fill="#7a7a7a"/>
<rect x="21.46" y="32.90" width="2.72" height="1.1" fill="#9670c8"/>
<rect x="24.86" y="32.90" width="0.68" height="1.1" fill="#7a7a7a"/>
<rect x="26.22" y="32.90" width="2.04" height="1.1" fill="#e0615e"/>
<rect x="28.94" y="32.90" width="3.40" height="1.1" fill="#e0615e"/>
<rect x="33.02" y="32.90" width="2.04" height="1.1" fill="#e0615e"/>
<rect x="35.74" y="32.90" width="8.16" height="1.1" fill="#e0615e"/>
<rect x="12.62" y="35.09" width="0.68" height="1.1" fill="#7a7a7a"/>
<rect x="9.90" y="39.47" width="0.68" height="1.1" fill="#7a7a7a"/>
<!--MINI1-->
   </g>
  </svg>
 </div>
 <div id="dbg">
  <svg class="abs" style="left:0;top:0" width="300" height="20" viewBox="0 0 300 20">
   <g fill="none" stroke="#6e6e6e" stroke-width=".75" stroke-linejoin="round" stroke-linecap="round">
    <rect x="8.300" y="5.900" width="9.300" height="8.900" rx="1"/><path d="M8.300 11.400H17.600"/>
    <path d="M56.200 5.700V14.900M58.100 5.700V14.900M56.200 5.700H58.100M56.200 14.900H58.100M60.800 5.700V14.900M62.700 5.700V14.900M60.800 5.700H62.700M60.800 14.900H62.700" stroke="#5c5c5c" stroke-width=".7"/>
    <g stroke="#b3b3b3">
     <path d="M78.800 11.200L83 7.200L87.200 11.200M85.500 11.600l1.900-.2-.1-2"/><path d="M79.500 13.400H86.500M79.500 14.500H86.500" stroke-width=".6"/>
     <path d="M106.200 6.200V11.800M103.800 9.600L106.200 12L108.600 9.600"/><path d="M103 13.700H109.400M103 14.800H109.400" stroke-width=".6"/>
     <path d="M128.700 12V6.400M126.300 8.600L128.700 6.200L131.100 8.600"/><path d="M125.500 13.700H131.900M125.500 14.800H131.900" stroke-width=".6"/>
    </g>
    <path d="M140.400 5.200V15.800" stroke="#bdbdbd" stroke-width=".7"/>
    <rect x="150.200" y="5.800" width="4.800" height="9" rx=".8"/><path d="M150.200 7.300H148.700a.7.700 0 0 0-.7.700V12.600a.7.700 0 0 0 .7.700H150.200M155 7.300H156.500a.7.700 0 0 1 .7.700V12.600a.7.700 0 0 1-.7.700H155"/>
    <circle cx="172.600" cy="7.200" r="1.300"/><circle cx="172.600" cy="13.500" r="1.300"/><circle cx="179.400" cy="10.300" r="1.300"/><path d="M173.800 7.800L178.200 9.800M173.800 12.900L178.200 10.900"/>
    <rect x="194.800" y="6" width="8.200" height="3.700" rx="1.850"/><rect x="194.800" y="11.300" width="8.200" height="3.700" rx="1.850"/><circle cx="197" cy="7.850" r=".9" fill="#6e6e6e"/><circle cx="200.800" cy="13.150" r=".9" fill="#6e6e6e"/>
    <path d="M210.500 5.200V15.800" stroke="#bdbdbd" stroke-width=".7"/>
   </g>
   <path d="M31 7.300H38.200L41.200 10.400L38.200 13.500H31a.7.700 0 0 1-.7-.7V8a.7.700 0 0 1 .7-.7Z" fill="#1470f5"/>
   <g stroke="#c4c4c4" stroke-width=".45" fill="none"><rect x="216.400" y="4.500" width="10.800" height="11.400" rx="1.600" stroke="#b9b9b9" stroke-dasharray=".8 .6"/><path d="M219 4.700V15.700M221.800 4.700V15.700M224.600 4.700V15.700M216.600 7.400H227M216.600 10.200H227M216.600 13H227"/></g>
  </svg>
  <span class="tt" style="left:230.8px;top:6.71px;font-size:7.9px;letter-spacing:0.191px;color:#333">BasicSample</span>
 </div>
</div>
<!--ED1-->
</div>
</body>
</html>
